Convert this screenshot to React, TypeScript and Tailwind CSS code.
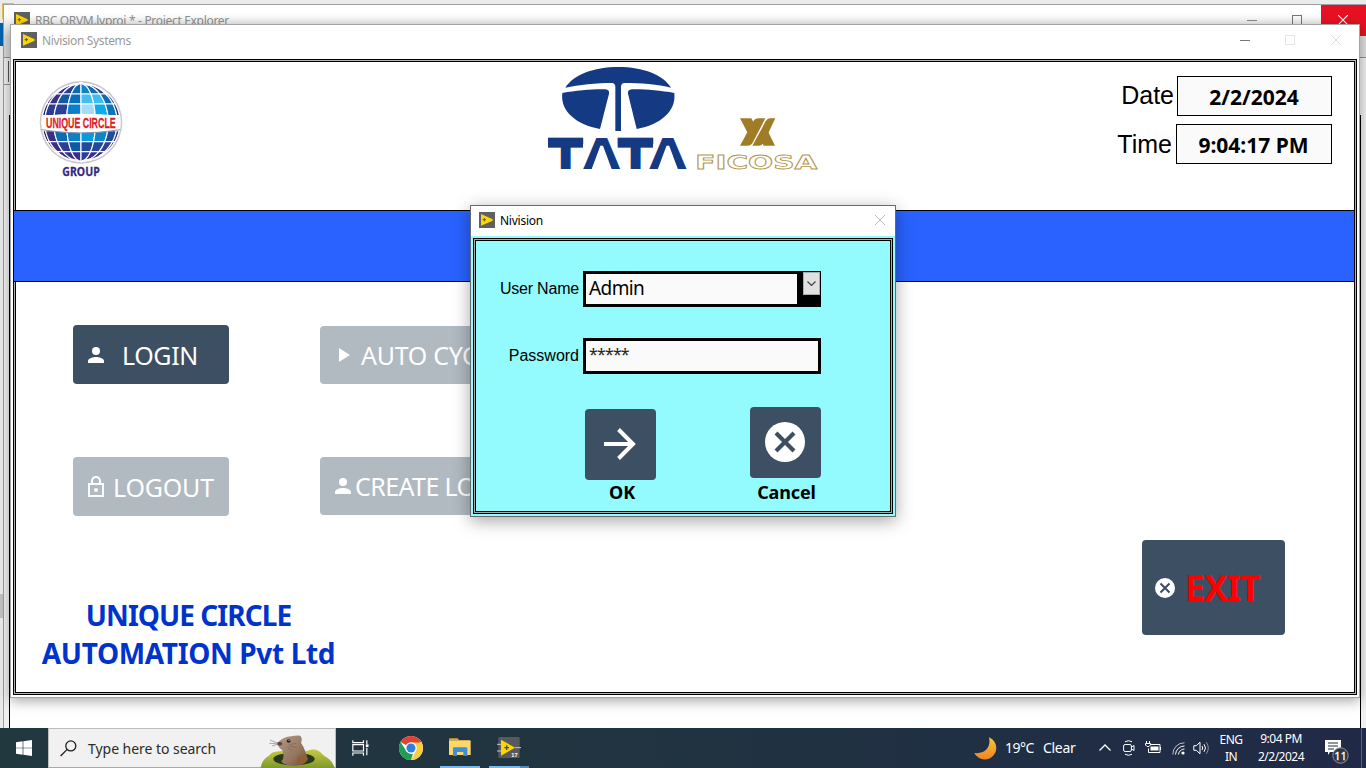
import type { ReactNode } from "react";

const NOTO = "font-['Noto_Sans',sans-serif]";
const ARIAL = "font-['Liberation_Sans',sans-serif]";

function LvIcon() {
  return (
    <svg width="16" height="16" viewBox="0 0 48 48" className="shrink-0">
      <rect width="48" height="48" fill="#5f6062" />
      <path d="M6 6 L41 22 L41 26 L6 41 Z" fill="#ffd500" />
      <path d="M16 18v10M11 23h10" stroke="#55565a" strokeWidth="3" />
    </svg>
  );
}

const CX = 243;
const CY = 367;
const R = 118;
const COLS = [-1, -0.93, -0.7, -0.37, 0, 0.37, 0.7, 0.93, 1];
const ROWS = [249, 282, 312, 347, 392, 425, 455, 485];
const CELLS = [
  ["#27215f", "#3a2f86", "#2b3f94", "#0c6bb0", "#1182c4", "#0d6bb3", "#2d3f91", "#27215f"],
  ["#2a2266", "#3a2f86", "#1159a2", "#0a6fb8", "#45bdf0", "#3fbdf0", "#0f6bb2", "#263a8a"],
  ["#2a2266", "#2f3a8c", "#2b3f94", "#0b80c8", "#a3dbf8", "#10aae9", "#0d74bc", "#27317c"],
  [],
  ["#27215f", "#3a2f86", "#0d6bb3", "#0b80c4", "#0a9adb", "#0c86cb", "#1d4d9c", "#332a7b"],
  ["#27215f", "#3a2f86", "#2b3f94", "#0d59a6", "#22499a", "#22499a", "#2d3f91", "#332a7b"],
  ["#27215f", "#33297b", "#3a2f86", "#3a2f86", "#2b3f94", "#3a2f86", "#33297b", "#27215f"],
];

function edge(f: number, y: number) {
  return CX + f * Math.sqrt(Math.max(0, (R - 1) * (R - 1) - (y - CY) * (y - CY)));
}

function Globe() {
  return (
    <svg width="86" height="100" viewBox="114 240 258 300" className="shrink-0 overflow-visible">
      <circle cx={CX} cy={CY} r="124" fill="#c9c9cb" />
      <circle cx={CX} cy={CY} r="119" fill="#fff" />
      {CELLS.map((row, r) =>
        row.map((fill, c) => {
          const y0 = ROWS[r];
          const y1 = ROWS[r + 1];
          const steps = [0, 0.25, 0.5, 0.75, 1].map((t) => y0 + (y1 - y0) * t);
          const left = steps.map((y) => `${edge(COLS[c], y)},${y}`);
          const right = steps.map((y) => `${edge(COLS[c + 1], y)},${y}`).reverse();
          return (
            <polygon key={`${r}-${c}`} points={[...left, ...right].join(" ")} fill={fill} stroke="#fff" strokeWidth="3.4" />
          );
        }),
      )}
      <path d="M125 348 Q243 334 361 348 L361 388 Q243 408 125 388Z" fill="#fff" />
      <path d="M125 389 Q243 409 361 389" stroke="#8f95a8" strokeWidth="3" fill="none" />
      <text x="138" y="383" textLength="209" lengthAdjust="spacingAndGlyphs" fontSize="43" fontWeight="bold" fill="#e01b24" stroke="#e01b24" strokeWidth=".8" fontFamily="Liberation Sans, sans-serif">
        UNIQUE CIRCLE
      </text>
      <text x="187" y="528" textLength="112" lengthAdjust="spacingAndGlyphs" fontSize="36" fontWeight="bold" fill="#352c80" stroke="#352c80" strokeWidth=".8" fontFamily="Noto Sans, sans-serif">
        GROUP
      </text>
    </svg>
  );
}

function TataLogo() {
  const font = { fontSize: 129, fontWeight: "bold", fontFamily: "DejaVu Sans, sans-serif", lengthAdjust: "spacingAndGlyphs" as const };
  return (
    <svg width="139" height="104" viewBox="54 33 417 312" className="shrink-0 overflow-visible" fill="#143a84">
      <path d="M106 98 C130 60 190 36 265 36 C340 36 400 60 423 98 C385 88 330 84 283 84 Q273 85 273 96 L273 228 L256 228 L256 96 Q256 85 246 84 C200 84 146 90 106 98Z" />
      <path d="M97 114 C140 106 190 102 226 103 Q239 104 237 116 L210 222 C140 209 90 170 97 114Z" />
      <path d="M433 114 C390 106 340 102 306 103 Q292 104 294 116 L320 222 C390 209 439 170 433 114Z" />
      <text x="54" y="342" textLength="106" {...font}>T</text>
      <text x="159" y="342" textLength="112" {...font}>A</text>
      <text x="263" y="342" textLength="107" {...font}>T</text>
      <text x="357" y="342" textLength="113" {...font}>A</text>
      <rect x="54" y="248" width="105" height="30" />
      <rect x="263" y="248" width="106" height="30" />
      <polygon points="211,272 219,272 246,345 184,345" fill="#fff" />
      <polygon points="409.500,272 417.500,272 444.500,345 382.500,345" fill="#fff" />
    </svg>
  );
}

function FicosaLogo() {
  return (
    <svg width="122" height="54" viewBox="498 186 366 162" className="shrink-0 overflow-visible">
      <g fill="#a07c27">
        <path d="M630 190 h34 l7 13 l-18 31z" />
        <path d="M735 272 h-34 l-6 -14 l18 -31z" />
        <path d="M630 272 L670 199 Q675 190 686 190 H706 L668 263 Q663 272 652 272Z" />
        <path d="M667 272 L707 199 Q712 190 720 190 H736 L701 263 Q696 272 687 272Z" />
      </g>
      <text x="496" y="341" textLength="366" lengthAdjust="spacingAndGlyphs" fontSize="56" fontWeight="bold" fill="#fff" stroke="#b5964a" strokeWidth="2.3" fontFamily="DejaVu Sans, sans-serif">
        FICOSA
      </text>
    </svg>
  );
}

function Person({ className }: { className: string }) {
  return (
    <svg width="16" height="16" viewBox="0 0 16 16" fill="#fff" className={`shrink-0 ${className}`}>
      <circle cx="8" cy="4" r="4" />
      <path d="M0 16v-2c0-2.700 5.300-4 8-4s8 1.300 8 4v2z" />
    </svg>
  );
}

function XCircle({ size }: { size: number }) {
  return (
    <svg width={size} height={size} viewBox="0 0 20 20" className="shrink-0">
      <circle cx="10" cy="10" r="10" fill="#fff" />
      <path d="M5.500 5.500l9 9M14.500 5.500l-9 9" stroke="#3d4f63" strokeWidth="2.100" />
    </svg>
  );
}

function MainButton({ children, className }: { children: ReactNode; className: string }) {
  return (
    <button className={`flex items-center rounded-[4px] text-left whitespace-nowrap text-[25px] leading-none text-white ${NOTO} ${className}`}>
      {children}
    </button>
  );
}

function Mole() {
  return (
    <svg width="75" height="34" viewBox="94 42 225 102" className="shrink-0">
      <defs>
        <linearGradient id="hill" x1="0" y1="0" x2="0" y2="1">
          <stop offset="0" stopColor="#c9c843" />
          <stop offset="1" stopColor="#7d9a2b" />
        </linearGradient>
        <linearGradient id="fur" x1="0" y1="0" x2="1" y2="1">
          <stop offset="0" stopColor="#b39a83" />
          <stop offset=".6" stopColor="#94765f" />
          <stop offset="1" stopColor="#6d4c36" />
        </linearGradient>
      </defs>
      <path d="M96 144 C100 115 118 112 130 98 C150 90 200 92 232 94 C260 82 272 92 284 106 C304 116 314 130 318 144Z" fill="url(#hill)" />
      <ellipse cx="196" cy="117" rx="62" ry="19" fill="#27391b" />
      <path d="M158 124 C168 112 164 102 161 91 C150 84 146 76 149 66 C158 56 172 50 188 49 C196 47 206 46 214 47 C221 52 220 62 217 68 C228 84 232 102 238 118 C232 141 164 142 158 124Z" fill="url(#fur)" />
      <path d="M208 112 q14-12 28 0 q-2 20-22 24 q-14-10-6-24z" fill="#8f5e35" />
      <ellipse cx="180" cy="63" rx="6" ry="5" fill="#31221d" />
      <circle cx="181" cy="61" r="1.500" fill="#fff" />
      <ellipse cx="153" cy="71" rx="8" ry="6" fill="#644650" />
      <path d="M124 60l22 9M122 70l22 1M130 78l15-5M182 74l20-4M180 78l22 4M176 82l14 10" stroke="#6c5c52" strokeWidth="1.500" />
    </svg>
  );
}

function ChromeIcon() {
  return (
    <svg width="24" height="24" viewBox="0 0 48 48">
      <circle cx="24" cy="24" r="24" fill="#fff" />
      <path d="M24 24 L3.200 12 A24 24 0 0 1 44.800 12 Z" fill="#dd4337" />
      <path d="M24 13 H45.300 A24 24 0 0 1 24 48 L33.500 30Z" fill="#fdcd40" />
      <path d="M3.200 12 L14.500 30 Q20 37 28 35 L24 48 A24 24 0 0 1 3.200 12Z" fill="#1e9d57" />
      <circle cx="24" cy="24" r="11.500" fill="#fff" />
      <circle cx="24" cy="24" r="9" fill="#2f7de9" />
    </svg>
  );
}

function Taskbar() {
  return (
    <div className={`absolute inset-x-0 top-[728px] flex h-[40px] bg-linear-to-r from-[#21383f] via-[#203340] to-[#202a48] text-white ${NOTO}`}>
      <div className="flex w-[48px] items-center justify-center">
        <svg width="16" height="16" viewBox="0 0 48 48" fill="#fff">
          <path d="M0 7l20-3v19H0zM22 3.700L48 0v23H22zM0 25h20v19L0 41zM22 25h26v23l-26-3.700z" />
        </svg>
      </div>
      <div className="flex w-[288px] border border-[#bdbdbd] border-b-[#a8a8a8] bg-[#f1f1f1]">
        <svg width="17" height="17" viewBox="0 0 17 17" fill="none" stroke="#1d1d1d" strokeWidth="1.300" className="mt-[11px] ml-[11px]">
          <circle cx="10.800" cy="5.900" r="5" />
          <path d="M7.200 9.400L.6 16" />
        </svg>
        <span className="mt-[9px] ml-[11px] w-[130px] text-[14px] leading-[21px] tracking-[-0.040px] whitespace-nowrap text-[#2b2b2b]">Type here to search</span>
        <div className="mt-[5px] ml-auto">
          <Mole />
        </div>
      </div>
      <svg width="17" height="16" viewBox="0 0 50 48" fill="none" stroke="#fff" strokeWidth="3.500" className="mt-[12px] ml-[16px]">
        <path d="M2 1v7h32V1M2 14h32v19H2zM2 47v-8h32v8M44 1v11M44 23v23" />
        <rect x="41" y="13" width="8" height="8" fill="#fff" stroke="none" />
      </svg>
      <div className="mt-[8px] ml-[30px]">
        <ChromeIcon />
      </div>
      <div className="ml-[17px] flex w-[40px] flex-col justify-between border-b-2 border-[#76b9ed]">
        <svg width="22" height="19" viewBox="0 0 66 57" className="mt-[10px] ml-[9px]">
          <path d="M0 6V3q0-2 2-2h24l4 5z" fill="#e8a21c" />
          <path d="M0 7h62q3 0 3 3v41H0z" fill="#ffd768" />
          <path d="M12 54V31q0-3 3-3h37q3 0 3 3v23H43V42H24v12z" fill="#3b8fd4" />
        </svg>
      </div>
      <div className="ml-[9px] flex w-[31px] flex-col border-b-2 border-[#76b9ed]">
        <svg width="24" height="21" viewBox="0 0 72 63" className="mt-[9px] ml-[8px] shrink-0">
          <rect x="4" width="64" height="63" rx="3" fill="#58595b" />
          <path d="M0 22h14M0 42h14M54 32h18" stroke="#c7c7c7" strokeWidth="3" />
          <path d="M12 8l42 24-42 24z" fill="#ffd500" />
          <path d="M29 25v14M22 32h14" stroke="#4c4d50" strokeWidth="4" />
          <text x="43" y="60" fontSize="17" fontWeight="bold" fill="#fff" fontFamily="Liberation Sans, sans-serif">17</text>
        </svg>
      </div>
      <div className="w-[9px] border-b-2 border-[#5689b4]" />
      <div className="ml-auto flex">
        <svg width="23" height="23" viewBox="0 0 69 69" className="mt-[9px]">
          <defs>
            <linearGradient id="moon" x1="0" y1="0" x2="0" y2="1">
              <stop offset="0" stopColor="#f7c83c" />
              <stop offset="1" stopColor="#f08322" />
            </linearGradient>
          </defs>
          <path d="M45 1 C74 14 74 52 45 65 C28 71 10 64 1 48 C34 52 52 30 45 1Z" fill="url(#moon)" />
        </svg>
        <span className="mt-[9px] ml-[8px] w-[38px] text-[14px] leading-[21px] tracking-[-0.500px]">19°C</span>
        <span className="mt-[9px] w-[56px] text-[14px] leading-[21px] tracking-[-0.300px]">Clear</span>
        <svg width="12" height="7" viewBox="0 0 12 7" fill="none" stroke="#fff" strokeWidth="1.300" className="mt-[16px]">
          <path d="M.5 6.500L6 1l5.500 5.500" />
        </svg>
        <svg width="12" height="16" viewBox="0 0 12 16" fill="none" stroke="#fff" className="mt-[12px] ml-[12px]">
          <rect x=".6" y="4.500" width="7.800" height="7" rx="1.500" />
          <path d="M8.500 7l2.500-1.500v5L8.500 9M2 1.800q3.500-2.200 7 0M2 14.200q3.500 2.200 7 0" />
        </svg>
        <svg width="17" height="13" viewBox="0 0 17 13" fill="none" stroke="#fff" className="mt-[13px] ml-[10px]">
          <path d="M5 3.500h10v8H3.500v-4M15.500 6v3M1.500 0v2M4.500 0v2" />
          <path d="M.5 2.500h5v1.500l-1.500 1.500h-2l-1.500-1.500z" />
          <rect x="5.500" y="5.500" width="8" height="4" fill="#fff" stroke="none" />
        </svg>
        <svg width="13" height="13" viewBox="0 0 13 13" fill="none" stroke="#b9bfcb" className="mt-[14px] ml-[10px]">
          <path d="M.8 12.500A11.500 11.500 0 0 1 12.500.8" />
          <path d="M3.500 12.500A9 9 0 0 1 12.500 4M6.500 12.500A6 6 0 0 1 12.500 7" stroke="#fff" />
          <circle cx="11" cy="11" r="1.600" fill="#fff" stroke="none" />
        </svg>
        <svg width="17" height="14" viewBox="0 0 17 14" fill="none" stroke="#fff" className="mt-[13px] ml-[8px]">
          <path d="M.8 4.700h2.500l3.700-3.500v11.600l-3.700-3.500H.8zM9 5q1.500 2 0 4M11 3.200q3 3.800 0 7.600" />
          <path d="M13.300 1.300q4 5.700 0 11.400" stroke="#8a93a5" />
        </svg>
        <div className="mt-[3px] ml-[5px] w-[32px] text-center text-[12px] leading-[17px] tracking-[-0.500px]">
          ENG
          <br />
          IN
        </div>
        <div className="mt-[2px] ml-[4px] w-[60px] text-center text-[12px] leading-[18px] tracking-[-0.500px] whitespace-nowrap">
          9:04 PM
          <br />
          2/2/2024
        </div>
        <svg width="26" height="26" viewBox="0 0 26 26" className="mt-[10px] mr-[11px] ml-[13px]">
          <path d="M1 2h16v12H6l-2 3v-3H1z" fill="#fff" />
          <path d="M4 5h10M4 8h10M4 11h6" stroke="#222c47" />
          <circle cx="16.500" cy="17.500" r="7.700" fill="#303744" stroke="#8e949e" />
          <text x="16.500" y="21.500" textAnchor="middle" fontSize="11" fill="#fff" stroke="#fff" strokeWidth=".3" fontFamily="Noto Sans, sans-serif">11</text>
        </svg>
        <div className="w-[5px] border-l border-[#55627a]" />
      </div>
    </div>
  );
}

function BackWindow() {
  return (
    <div className="absolute top-[4px] left-[3px] flex h-[724px] w-[1363px] flex-col border-t border-l border-[#a0a0a0] bg-[#f0f0f0]">
      <div className={`flex h-[31px] bg-linear-to-b from-white from-30% to-[#dedede] text-[12px] text-[#8f8f8f] ${NOTO}`}>
        <div className="mt-[7px] ml-[10px]">
          <LvIcon />
        </div>
        <span className="mt-[6px] ml-[5px] leading-[19px] tracking-[-0.310px]">RBC ORVM.lvproj * - Project Explorer</span>
        <div className="ml-auto flex">
          <div className="mt-[15px] h-px w-[10px] bg-[#888]" />
          <div className="mt-[10px] ml-[35px] size-[10px] border border-[#777]" />
          <div className="ml-[19px] flex w-[45px] bg-[#e81123] pt-[10px] pl-[17px]">
            <svg width="10" height="10" viewBox="0 0 10 10" stroke="#fff" strokeWidth="1.100">
              <path d="M0 0l10 10M10 0L0 10" />
            </svg>
          </div>
        </div>
      </div>
      <div className="h-[22px] border-b border-[#909090] bg-linear-to-r from-[#dadada] to-[#e0e0e0]" />
      <div className="flex h-[27px] w-[10px] border-b border-[#909090] pt-[3px] pl-[4px]">
        <div className="h-[21px] w-px bg-[#555]" />
      </div>
      <div className="h-[30px]" />
      <div className="mr-[5px] ml-[5px] flex-1 border-x border-t border-black bg-white" />
    </div>
  );
}

function Globals() {
  const box = `flex h-[40px] items-center justify-center border border-black bg-[#fafafa] pt-[2px] text-[21px] leading-none font-bold ${NOTO}`;
  return (
    <div className={`flex flex-col items-end pt-[16px] pr-[24px] text-black ${ARIAL}`}>
      <div className="flex">
        <span className="mt-[4px] mr-[3px] text-[25px] leading-[30px]">Date</span>
        <div className={`w-[155px] pr-px ${box}`}>2/2/2024</div>
      </div>
      <div className="mt-[8px] flex">
        <span className="mt-[5px] mr-[4px] text-[25px] leading-[30px]">Time</span>
        <div className={`w-[156px] pr-px ${box}`}>9:04:17 PM</div>
      </div>
    </div>
  );
}

function MainWindow() {
  return (
    <div className="absolute top-[24px] left-[10px] flex h-[674px] w-[1350px] flex-col border border-[#a3a3a3] bg-white shadow-[0_3px_12px_rgba(0,0,0,0.35)]">
      <div className={`flex h-[34px] text-[12px] text-[#999] ${NOTO}`}>
        <div className="mt-[7px] ml-[10px]">
          <LvIcon />
        </div>
        <span className="mt-[6px] ml-[5px] leading-[19px] tracking-[-0.360px]">Nivision Systems</span>
        <div className="mt-[10px] mr-[18px] ml-auto flex">
          <div className="mt-[5px] h-px w-[10px] bg-[#777]" />
          <div className="ml-[35px] size-[10px] border border-[#e6e6e6]" />
          <svg width="10" height="10" viewBox="0 0 10 10" stroke="#ddd" className="ml-[36px]">
            <path d="M0 0l10 10M10 0L0 10" />
          </svg>
        </div>
      </div>
      <div className="mr-[2px] ml-[2px] flex h-[636px] flex-col border border-black shadow-[inset_0_0_0_1px_#b4b4b4,inset_0_0_0_2px_#000]">
        <header className="flex h-[150px] items-start">
          <div className="mt-[20px] ml-[24px]">
            <Globe />
          </div>
          <div className="mt-[6px] ml-[424px] flex">
            <TataLogo />
            <div className="mt-[51px] ml-[9px]">
              <FicosaLogo />
            </div>
          </div>
          <div className="ml-auto">
            <Globals />
          </div>
        </header>
        <div className="mr-px h-[72px] border-y border-r border-black bg-[#2962ff]" />
        <div className="flex flex-1 justify-between pr-[71px] pl-[59px]">
          <div>
            <div className="grid w-[437px] grid-cols-[156px_190px] gap-x-[91px] gap-y-[73px] pt-[43px]">
              <MainButton className="h-[59px] bg-[#3d4f63]">
                <Person className="ml-[15px]" />
                <span className="ml-[18px] pt-[1px] tracking-[-0.400px]">LOGIN</span>
              </MainButton>
              <MainButton className="mt-px h-[58px] bg-[#b1b9c1]">
                <svg width="11" height="14" viewBox="0 0 11 14" fill="#fff" className="ml-[19px] shrink-0">
                  <path d="M0 0l11 7-11 7z" />
                </svg>
                <span className="ml-[11px] pt-[1px] tracking-[-0.300px]">AUTO CYCLE</span>
              </MainButton>
              <MainButton className="h-[59px] bg-[#b1b9c1]">
                <svg width="16" height="21" viewBox="0 0 16 21" fill="none" stroke="#fff" strokeWidth="2" className="ml-[15px] shrink-0">
                  <path d="M1 8h14v12H1zM4 8V5a4 4 0 0 1 8 0v3" />
                  <circle cx="8" cy="14" r="2" fill="#fff" stroke="none" />
                </svg>
                <span className="ml-[9px] pt-[1px] tracking-[-0.200px]">LOGOUT</span>
              </MainButton>
              <MainButton className="h-[58px] bg-[#b1b9c1]">
                <Person className="ml-[15px]" />
                <span className="ml-[4px] pt-[1px] tracking-[-0.600px]">CREATE LOGIN</span>
              </MainButton>
            </div>
            <div className={`mt-[80px] -ml-[59px] w-[349px] text-center text-[28px] leading-[38px] font-bold whitespace-nowrap text-[#0033cc] ${NOTO}`}>
              <div className="tracking-[-0.950px]">UNIQUE CIRCLE</div>
              <div className="tracking-[-0.350px]">AUTOMATION Pvt Ltd</div>
            </div>
          </div>
          <button className="mt-[258px] flex h-[95px] w-[143px] items-center rounded-[4px] bg-[#3d4f63] pl-[13px]">
            <XCircle size={20} />
            <span className={`ml-[10px] text-[36px] leading-none font-bold tracking-[-1.100px] text-[#ff0000] ${NOTO}`}>EXIT</span>
          </button>
        </div>
      </div>
    </div>
  );
}

function LoginDialog() {
  return (
    <div className="absolute top-[205px] left-[470px] flex h-[312px] w-[426px] flex-col border border-[#666b6d] bg-[#93fbfd] text-black shadow-[0_4px_16px_rgba(0,0,0,0.35)]">
      <div className={`flex h-[30px] bg-white text-[12px] ${NOTO}`}>
        <div className="mt-[6px] ml-[8px]">
          <LvIcon />
        </div>
        <span className="mt-[5px] ml-[5px] leading-[19px] tracking-[-0.250px]">Nivision</span>
        <svg width="10" height="10" viewBox="0 0 10 10" stroke="#bbb" className="mt-[9px] mr-[10px] ml-auto">
          <path d="M0 0l10 10M10 0L0 10" />
        </svg>
      </div>
      <div className="mx-[2px] mt-[2px] flex h-[276px] flex-col border border-black shadow-[inset_0_0_0_1px_#b0a8a8,inset_0_0_0_2px_#000]">
        <div className="mt-[32px] flex h-[36px]">
          <label className={`w-[105px] pt-[8px] text-right text-[16px] leading-[20px] tracking-[-0.200px] ${ARIAL}`}>User Name</label>
          <div className="ml-[4px] flex w-[238px] bg-black">
            <div className={`my-[3px] ml-[3px] w-[211px] bg-[#fafafa] pl-[3px] text-[19px] leading-[29px] tracking-[-0.600px] ${NOTO}`}>Admin</div>
            <div className="mt-px ml-[6px] flex h-[23px] w-[17px] items-center justify-center border border-[#adadad] bg-[#e1e1e1]">
              <svg width="9" height="5" viewBox="0 0 9 5" fill="none" stroke="#444" strokeWidth="1.200">
                <path d="M.5.500l4 4 4-4" />
              </svg>
            </div>
          </div>
        </div>
        <div className="mt-[31px] flex h-[36px]">
          <label className={`w-[105px] pt-[8px] text-right text-[16px] leading-[20px] ${ARIAL}`}>Password</label>
          <div className={`ml-[4px] w-[238px] border-[3px] border-black bg-[#fafafa] pl-[3px] text-[16px] leading-[27px] tracking-[-0.850px] text-[#222] ${NOTO}`}>*****</div>
        </div>
        <div className={`mt-[33px] ml-[111px] flex text-[18px] leading-[24px] font-bold ${NOTO}`}>
          <div className="flex w-[71px] flex-col items-center pt-[2px]">
            <button className="flex size-[71px] items-center justify-center rounded-[4px] bg-[#3d4f63] pr-px pb-[2px]">
              <svg width="32" height="32" viewBox="0 0 32 32" fill="none" stroke="#fff" strokeWidth="4">
                <path d="M0 16h30M14.500 1.500L29 16 14.500 30.500" />
              </svg>
            </button>
            <span className="ml-[3px]">OK</span>
          </div>
          <div className="ml-[94px] flex w-[71px] flex-col items-center">
            <button className="flex size-[71px] items-center justify-center rounded-[4px] bg-[#3d4f63] pr-px pb-px">
              <XCircle size={40} />
            </button>
            <span className="mt-[2px] ml-[2px] tracking-[-0.150px]">Cancel</span>
          </div>
        </div>
      </div>
    </div>
  );
}

export default function App() {
  return (
    <div className="relative h-[768px] w-[1366px] overflow-hidden bg-[#ebebeb]">
      <div className="absolute top-[3px] left-[2px] h-[16px] w-[12px] border-2 border-[#e0c04c] bg-[#efe3b0]" />
      <div className="absolute top-[23px] left-0 h-[23px] w-[4px] bg-[#0061aa]" />
      <div className="absolute top-[594px] left-0 h-[24px] w-[4px] bg-[#c2c2c2]" />
      <BackWindow />
      <MainWindow />
      <LoginDialog />
      <Taskbar />
    </div>
  );
}
